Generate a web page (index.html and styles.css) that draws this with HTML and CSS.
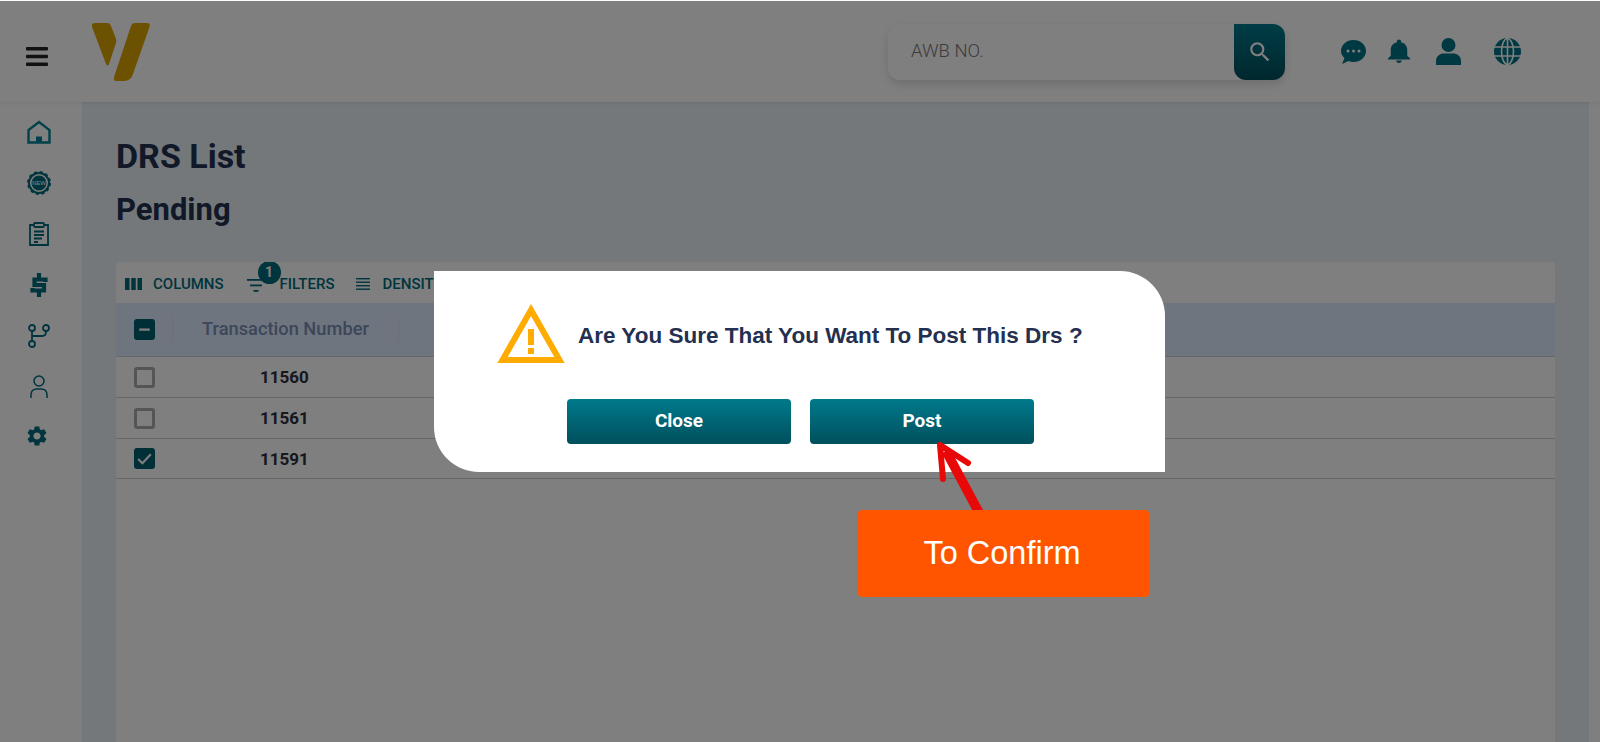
FILE: index.html
```html
<!DOCTYPE html>
<html>
<head>
    <meta charset="utf-8">
    <title>DRS List</title>
    <link rel="stylesheet" href="styles.css">
</head>
<body>
    <header class="topbar">
        <svg class="menu-icon" viewBox="0 0 22 19"><rect y="0" width="22" height="3.4" rx="1"/><rect y="7.8" width="22" height="3.4" rx="1"/><rect y="15.6" width="22" height="3.4" rx="1"/></svg>
        <svg class="logo" viewBox="0 0 58 60"><path d="M3 1h12q3 0 4 3l5 13q.5 2 0 4l-7 21q-1 3-3 0L0 5Q-1 1 3 1z"/><path d="M43 1h12q3.500 0 2.500 4L41 52q-2 7-9 7H25q-4 0-3-4L39 4q1-3 4-3z"/></svg>
        <div class="search">
            <span class="search-hint">AWB NO.</span>
            <div class="search-btn">
                <svg viewBox="0 0 24 24"><path d="M15.500 14h-.79l-.28-.27A6.471 6.471 0 0 0 16 9.500 6.500 6.500 0 1 0 9.500 16c1.610 0 3.090-.59 4.230-1.570l.27.28v.79l5 4.990L20.490 19l-4.990-5zm-6 0C7.010 14 5 11.990 5 9.500S7.010 5 9.500 5 14 7.010 14 9.500 11.990 14 9.500 14z"/></svg>
            </div>
        </div>
        <div class="top-icons">
            <svg class="top-icon chat" viewBox="0 0 25 24"><path d="M12.500 0C19.400 0 25 4.900 25 11s-5.600 11-12.500 11c-1.800 0-3.500-.3-5-.9L1 24l2.500-6C1.300 16 0 13.600 0 11 0 4.900 5.600 0 12.500 0z"/><circle class="dot" cx="7" cy="11" r="1.500"/><circle class="dot" cx="12.500" cy="11" r="1.500"/><circle class="dot" cx="18" cy="11" r="1.500"/></svg>
            <svg class="top-icon bell" viewBox="4 2 16 20" preserveAspectRatio="none"><path d="M12 22c1.100 0 2-.9 2-2h-4c0 1.100.89 2 2 2zm6-6v-5c0-3.070-1.640-5.640-4.500-6.320V4c0-.83-.67-1.500-1.500-1.500s-1.500.67-1.500 1.500v.68C7.630 5.360 6 7.920 6 11v5l-2 2v1h16v-1l-2-2z"/></svg>
            <svg class="top-icon user" viewBox="0 0 25 27"><ellipse cx="12.500" cy="7" rx="7" ry="7"/><path d="M0 27v-4c0-5 4-7.500 8-7.500h9c4 0 8 2.500 8 7.500v4z"/></svg>
            <svg class="top-icon globe" viewBox="0 0 27 27"><circle cx="13.500" cy="13.500" r="13.500"/><g class="globe-lines"><ellipse cx="13.500" cy="13.500" rx="6" ry="13"/><path d="M13.500 0v27M0 9h27M0 18h27"/></g></svg>
        </div>
    </header>

    <div class="layout">
        <nav class="sidebar">
            <svg class="nav-icon home" viewBox="0 0 24 23"><path class="line" d="M1.500 22V9.500L12 1.500l10.500 8V22z"/><rect class="fill" x="9" y="16" width="6" height="6"/></svg>
            <svg class="nav-icon badge" viewBox="0 0 24 24"><circle class="line thick" cx="12" cy="12" r="10"/><circle class="line dash" cx="12" cy="12" r="11"/><circle class="fill" cx="12" cy="12" r="7.500"/><text class="badge-text" x="12" y="14">NEW</text></svg>
            <svg class="nav-icon" viewBox="0 0 24 24"><path class="line" d="M7 3H3v20h18V3h-4"/><rect class="line" x="7" y="1" width="10" height="4" rx="1"/><path class="line" d="M7 9.500h10M7 13h10M7 16.500h8M7 20h4"/></svg>
            <svg class="nav-icon" viewBox="0 0 24 24"><path class="line dollar" d="M18.500 9V6.500H7.500V12h9.500v5.500H5.500V15M12 0v5M12 19v5"/></svg>
            <svg class="nav-icon" viewBox="0 0 24 24"><circle class="line" cx="5" cy="4" r="3"/><circle class="line" cx="19" cy="4" r="3"/><circle class="line" cx="5" cy="20" r="3"/><path class="line" d="M5 7v10M19 7v1q0 4-4 4H5"/></svg>
            <svg class="nav-icon" viewBox="0 0 24 24"><circle class="line person" cx="12" cy="6" r="5"/><path class="line person" d="M4 23v-3q0-6 6-6h4q6 0 6 6v3"/></svg>
            <svg class="nav-icon gear" viewBox="2 2 20 20"><path class="fill" d="M19.140 12.940c.04-.3.06-.61.06-.94 0-.32-.02-.64-.07-.94l2.030-1.580a.49.49 0 0 0 .12-.61l-1.920-3.320a.488.488 0 0 0-.59-.22l-2.390.96c-.5-.38-1.030-.7-1.620-.94l-.36-2.540a.484.484 0 0 0-.48-.41h-3.840c-.24 0-.43.17-.47.41l-.36 2.540c-.59.24-1.130.57-1.620.94l-2.390-.96c-.22-.08-.47 0-.59.22L2.740 8.870c-.12.21-.08.47.12.61l2.030 1.580c-.05.3-.09.63-.09.94s.02.64.07.94l-2.030 1.580a.49.49 0 0 0-.12.61l1.920 3.320c.12.22.37.29.59.22l2.390-.96c.5.38 1.030.7 1.620.94l.36 2.540c.05.24.24.41.48.41h3.840c.24 0 .44-.17.47-.41l.36-2.540c.59-.24 1.130-.56 1.620-.94l2.390.96c.22.08.47 0 .59-.22l1.920-3.320c.12-.22.07-.47-.12-.61l-2.010-1.580zM12 15.600c-1.980 0-3.600-1.620-3.600-3.600s1.620-3.600 3.600-3.600 3.600 1.620 3.600 3.600-1.620 3.600-3.600 3.600z"/></svg>
        </nav>

        <main class="content">
            <h1 class="page-title">DRS List</h1>
            <h2 class="page-sub">Pending</h2>

            <section class="card">
                <div class="toolbar">
                    <div class="tool">
                        <svg class="tool-icon" viewBox="0 0 17 12"><rect width="4.500" height="12"/><rect x="6.250" width="4.500" height="12"/><rect x="12.500" width="4.500" height="12"/></svg>
                        <span>COLUMNS</span>
                    </div>
                    <div class="tool tool-filter">
                        <svg class="tool-icon filter-icon" viewBox="0 0 18 13"><rect width="18" height="1.800"/><rect x="3" y="5.500" width="12" height="1.800"/><rect x="6.500" y="11" width="5" height="1.800"/></svg>
                        <span class="count">1</span>
                        <span>FILTERS</span>
                    </div>
                    <div class="tool tool-density">
                        <svg class="tool-icon density-icon" viewBox="0 0 14 12"><rect width="14" height="1.400"/><rect y="3.500" width="14" height="1.400"/><rect y="7" width="14" height="1.400"/><rect y="10.500" width="14" height="1.400"/></svg>
                        <span>DENSITY</span>
                    </div>
                </div>

                <div class="head-row">
                    <span class="check check-on"><svg viewBox="0 0 20 20"><rect x="5" y="9" width="10" height="2.200"/></svg></span>
                    <span class="col-sep"></span>
                    <span class="head-label">Transaction Number</span>
                    <span class="col-sep"></span>
                </div>
                <div class="row">
                    <span class="check"></span>
                    <span class="cell-num">11560</span>
                </div>
                <div class="row">
                    <span class="check"></span>
                    <span class="cell-num">11561</span>
                </div>
                <div class="row">
                    <span class="check check-on"><svg viewBox="0 0 20 20"><path class="tick" d="M4 10.500l4 4 8-8.500"/></svg></span>
                    <span class="cell-num">11591</span>
                </div>
            </section>
        </main>

        <div class="scroll-strip"></div>
    </div>

    <div class="overlay"></div>

    <div class="dialog">
        <div class="dialog-msg">
            <svg class="warn" viewBox="0 0 68 60"><path class="warn-line" d="M34 6L5.500 56h57z"/><rect class="warn-mark" x="31" y="25" width="6" height="16"/><rect class="warn-mark" x="31" y="44" width="6" height="6"/></svg>
            <p>Are You Sure That You Want To Post This Drs ?</p>
        </div>
        <div class="dialog-btns">
            <button class="btn">Close</button>
            <button class="btn">Post</button>
        </div>
    </div>

    <svg class="arrow" viewBox="0 0 60 80"><path class="arrow-stem" d="M13 10l37 69"/><path class="arrow-head" d="M10 38L7 4l28 18"/></svg>
    <div class="callout">To Confirm</div>
</body>
</html>
```

FILE: styles.css
```css
* {
    box-sizing: border-box;
}

html, body {
    height: 100%;
}

body {
    margin: 0;
    padding-top: 1px;
    background: #fff;
    font-family: Roboto, "Liberation Sans", sans-serif;
    overflow: hidden;
}

/* top bar */
.topbar {
    height: 101px;
    display: flex;
    align-items: flex-start;
    background: #fff;
    position: relative;
    z-index: 1;
    box-shadow: 0 1px 4px rgba(0, 0, 0, 0.08);
}

.menu-icon {
    width: 22px;
    height: 19px;
    margin: 46px 0 0 26px;
    fill: #222;
}

.logo {
    width: 58px;
    height: 60px;
    margin: 21px 0 0 44px;
    fill: #d9a400;
}

.search {
    width: 397px;
    height: 56px;
    margin: 23px 0 0 738px;
    padding-left: 23px;
    display: flex;
    align-items: center;
    justify-content: space-between;
    border-radius: 12px;
    background: #fff;
    box-shadow: 0 4px 10px rgba(0, 0, 0, 0.14);
}

.search-hint {
    padding-bottom: 2px;
    font-size: 18.5px;
    font-weight: 300;
    color: #777;
}

.search-btn {
    width: 51px;
    height: 56px;
    display: flex;
    align-items: center;
    justify-content: center;
    border-radius: 0 12px 12px 12px;
    background: linear-gradient(#007a8c, #004f5c);
}

.search-btn svg {
    width: 26px;
    height: 26px;
    fill: #fff;
}

.top-icons {
    margin: 37px 0 0 56px;
    display: flex;
    align-items: flex-start;
}

.top-icon {
    display: block;
    fill: #007285;
}

.chat {
    width: 25px;
    height: 24px;
    margin-top: 2px;
}

.dot {
    fill: #fff;
}

.bell {
    width: 22px;
    height: 24px;
    margin: 1px 0 0 22px;
}

.user {
    width: 25px;
    height: 27px;
    margin-left: 26px;
}

.globe {
    width: 27px;
    height: 27px;
    margin-left: 33px;
}

.globe-lines {
    fill: none;
    stroke: #fff;
    stroke-width: 1.6;
}

/* sidebar */
.layout {
    height: 640px;
    display: grid;
    grid-template-columns: 82px 1fr 11px;
}

.sidebar {
    padding: 18px 0 0 27px;
    display: flex;
    flex-direction: column;
    gap: 27px;
    border-radius: 0 0 10px 0;
    background: #fff;
}

.nav-icon {
    display: block;
    width: 24px;
    height: 24px;
}

.gear {
    width: 20px;
    height: 20px;
}

.line {
    fill: none;
    stroke: #006a7c;
    stroke-width: 1.8;
}

.fill {
    fill: #006a7c;
}

.home .line {
    stroke: #008296;
    stroke-width: 2.400;
}

.home .fill {
    fill: #008296;
}

.thick {
    stroke-width: 2;
}

.dash {
    stroke-width: 2;
    stroke-dasharray: 3 2.800;
}

.dollar {
    stroke-width: 4.200;
}

.person {
    stroke-width: 1.500;
}

.badge-text {
    font-size: 6px;
    font-family: "Liberation Sans", sans-serif;
    text-anchor: middle;
    fill: #fff;
}

/* main area */
.content {
    padding: 33px 34px 0;
    background: #e8f0f6;
    min-width: 0;
}

.scroll-strip {
    background: #fff;
}

.page-title {
    margin: 0;
    font-size: 34px;
    line-height: 42px;
    font-weight: 700;
    color: #23304f;
}

.page-sub {
    margin: 14px 0 0;
    font-size: 31px;
    line-height: 38px;
    font-weight: 700;
    color: #23304f;
}

.card {
    margin-top: 33px;
    height: 500px;
    background: #fff;
    border-radius: 4px 4px 0 0;
    overflow: hidden;
}

.toolbar {
    height: 41px;
    padding: 2px 0 0 9px;
    display: flex;
    align-items: center;
    gap: 21px;
    font-size: 15px;
    font-weight: 500;
    color: #006a7c;
}

.tool {
    display: flex;
    align-items: center;
    gap: 11px;
    position: relative;
}

.tool-icon {
    width: 17px;
    height: 12px;
    fill: #006a7c;
}

.tool-filter {
    margin-left: 2px;
    gap: 15px;
}

.tool-density {
    gap: 13px;
}

.filter-icon {
    width: 18px;
    height: 13px;
    margin-top: 4px;
}

.density-icon {
    width: 14px;
}

.count {
    position: absolute;
    left: 11px;
    top: -14px;
    width: 23px;
    height: 23px;
    border-radius: 50%;
    background: #006a7c;
    color: #fff;
    font-size: 14px;
    font-weight: 700;
    line-height: 23px;
    text-align: center;
}

.head-row {
    height: 54px;
    padding-left: 18px;
    display: flex;
    align-items: center;
    background: #dcebff;
    border-bottom: 1px solid #ccd;
}

.head-label {
    width: 225px;
    padding-bottom: 2px;
    text-align: center;
    font-size: 18.3px;
    font-weight: 500;
    color: #7a8cb4;
}

.col-sep {
    width: 1px;
    height: 26px;
    background: #dde;
}

.head-row .check + .col-sep {
    margin-left: 17px;
}

.row {
    height: 41px;
    padding-left: 18px;
    display: flex;
    align-items: center;
    border-bottom: 1px solid #ccc;
}

.row:last-child {
    height: 40px;
}

.check {
    width: 21px;
    height: 21px;
    flex: none;
    border: 3px solid #aaa;
    border-radius: 3px;
}

.check-on {
    border: 0;
    background: #005f6f;
}

.check svg {
    display: block;
    width: 21px;
    height: 21px;
    fill: #fff;
}

.check .tick {
    fill: none;
    stroke: #fff;
    stroke-width: 2;
}

.cell-num {
    width: 259px;
    text-align: center;
    font-size: 17px;
    font-weight: 700;
    color: #2e2e3a;
}

/* modal on top of everything */
.overlay {
    position: fixed;
    inset: 1px 0 0;
    z-index: 5;
    background: rgba(0, 0, 0, 0.5);
}

.dialog {
    position: fixed;
    left: 434px;
    top: 271px;
    width: 731px;
    height: 201px;
    z-index: 6;
    padding: 33px 0 0 63px;
    background: #fff;
    border-radius: 0 45px 0 45px;
}

.dialog-msg {
    display: flex;
    align-items: center;
    gap: 13px;
}

.dialog-msg p {
    margin: 0;
    padding-top: 4px;
    font-family: "Liberation Sans", sans-serif;
    font-size: 22.5px;
    font-weight: 700;
    color: #23304f;
    white-space: nowrap;
}

.warn {
    width: 68px;
    height: 60px;
    flex: none;
}

.warn-line {
    fill: none;
    stroke: #ffab00;
    stroke-width: 6;
}

.warn-mark {
    fill: #ffab00;
}

.dialog-btns {
    margin: 35px 0 0 70px;
    display: flex;
    gap: 19px;
}

.btn {
    width: 224px;
    height: 45px;
    padding-bottom: 3px;
    border: 0;
    border-radius: 4px;
    background: linear-gradient(#007a8c, #004f5c);
    color: #fff;
    font-family: Roboto, sans-serif;
    font-size: 19px;
    font-weight: 700;
}

.arrow {
    position: fixed;
    left: 933px;
    top: 441px;
    width: 60px;
    height: 80px;
    z-index: 7;
    fill: none;
    stroke: #e80808;
    stroke-linecap: round;
    stroke-linejoin: round;
}

.arrow-stem {
    stroke-width: 9.500;
    stroke-linecap: butt;
}

.arrow-head {
    stroke-width: 6;
}

.callout {
    position: fixed;
    left: 858px;
    top: 510px;
    width: 291px;
    height: 87px;
    z-index: 8;
    padding-right: 3px;
    display: flex;
    align-items: center;
    justify-content: center;
    border-radius: 4px;
    background: #ff5500;
    color: #fff;
    font-family: "Liberation Sans", sans-serif;
    font-size: 32.5px;
}
```
